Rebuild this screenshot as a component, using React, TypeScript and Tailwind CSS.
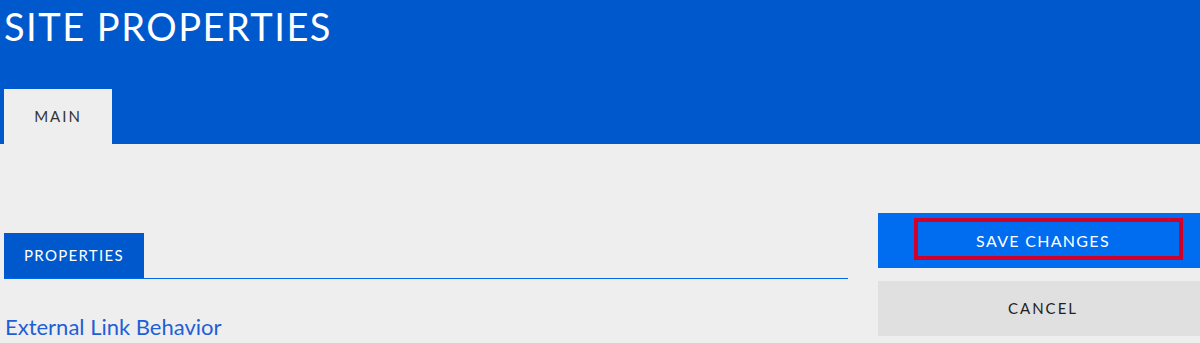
export default function App() {
  return (
    <div className="min-h-[343px] bg-[#eeeeee] font-['Lato',sans-serif]">
      {/* Header */}
      <header className="flex h-[144px] flex-col justify-between bg-[#0059cc] pl-[4px]">
        <h1 className="pt-[3px] text-[38px] leading-[46px] tracking-[1.5px] text-white">
          SITE PROPERTIES
        </h1>
        <div className="flex">
          <div className="flex h-[55px] w-[108px] items-center justify-center bg-[#eeeeee] text-[15px] tracking-[2px] text-[#333333]">
            MAIN
          </div>
        </div>
      </header>

      {/* Body */}
      <div className="flex gap-[30px] pl-[4px] pt-[69px]">
        <div className="w-[844px] pt-[20px]">
          <div className="flex border-b border-[#0066e6]">
            <div className="flex h-[45px] w-[140px] items-center justify-center bg-[#0059cc] text-[15px] tracking-[1.3px] text-white">
              PROPERTIES
            </div>
          </div>
          <h2 className="mt-[36px] pl-[1px] text-[22px] leading-[24px] text-[#1f5fd6]">
            External Link Behavior
          </h2>
        </div>

        <div className="flex flex-1 flex-col gap-[13px]">
          <button className="relative flex h-[55px] items-center justify-center bg-[#006cf0] pl-[8px] text-[16px] tracking-[1.3px] text-white">
            SAVE CHANGES
            <span className="absolute left-[36px] right-[17px] top-[5px] bottom-[8px] border-4 border-[#d0002a]" />
          </button>
          <button className="flex h-[55px] items-center justify-center bg-[#e0e0e0] pl-[8px] text-[15px] tracking-[2px] text-[#222222]">
            CANCEL
          </button>
        </div>
      </div>
    </div>
  );
}
